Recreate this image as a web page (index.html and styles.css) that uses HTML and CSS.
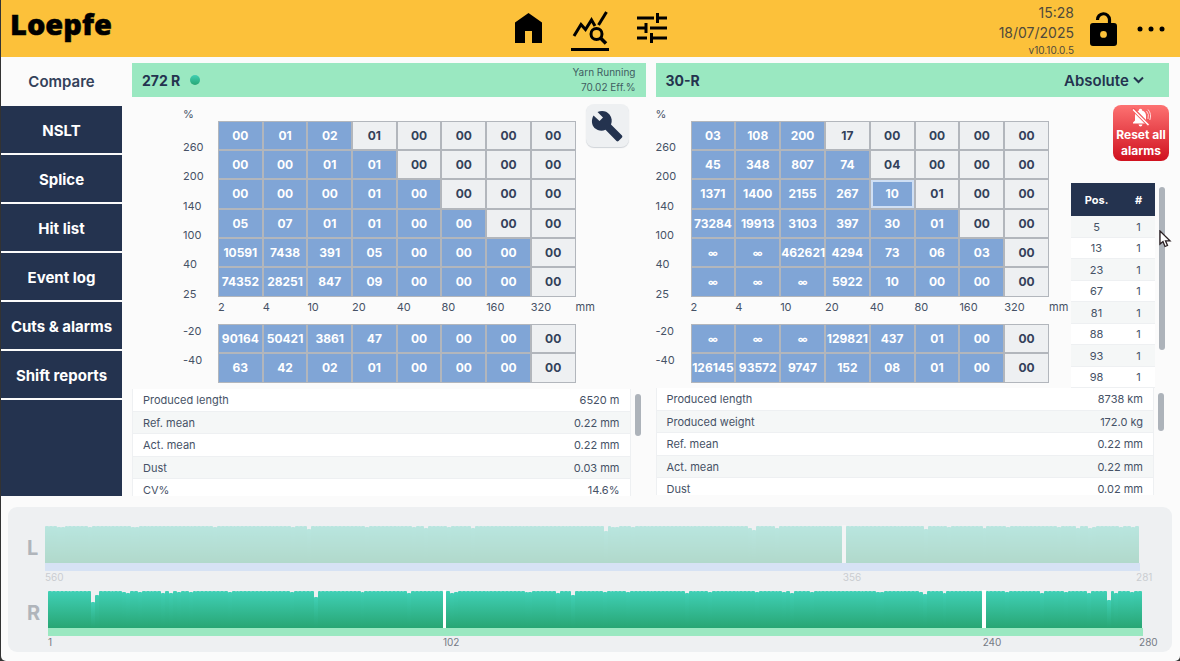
FILE: index.html
```html
<!DOCTYPE html>
<html lang="en">
<head>
<meta charset="utf-8">
<meta name="viewport" content="width=device-width, initial-scale=1">
<title>Loepfe – Compare</title>
<link rel="stylesheet" href="styles.css">
</head>
<body>
<header class="topbar">
  <div class="logo">Loepfe</div>
  <nav class="modes" aria-label="Main">
    <button class="mode" type="button" aria-label="Home">
      <svg width="27" height="30" viewBox="0 0 27 30"><path d="M0 30V9.500L13.500 0L27 9.500V30H17V18H10V30Z"/></svg>
    </button>
    <button class="mode mode-active" type="button" aria-label="Analysis">
      <svg width="36" height="34" viewBox="0 0 36 34" fill="none" stroke="#000" stroke-width="3"><path d="M2 25L9 13.500L13.500 18.500L19.500 9L23 15"/><path d="M26.500 14L34.500 1"/><circle cx="24.500" cy="23" r="5.500"/><path d="M28.500 27L34 32.500" stroke-width="3.500"/></svg>
    </button>
    <button class="mode" type="button" aria-label="Settings">
      <svg width="30" height="30" viewBox="0 0 30 30" fill="none" stroke="#000" stroke-width="3"><path d="M0 5H17M20.500 5H30M20.500 0V10M0 15H9M9 10V20M13 15H30M0 25H10M14.500 25H30M14.500 20V30"/></svg>
    </button>
  </nav>
  <div class="status">
    <div class="clock">
      <span>15:28</span>
      <span>18/07/2025</span>
      <small>v10.10.0.5</small>
    </div>
    <button class="icon-button" type="button" aria-label="Unlock">
      <svg width="27" height="35" viewBox="0 0 27 35"><path d="M7.500 9A6 6 0 0 1 19.500 8.500V13" fill="none" stroke="#000" stroke-width="3.200"/><path fill-rule="evenodd" d="M3 12H24Q27 12 27 15V32Q27 35 24 35H3Q0 35 0 32V15Q0 12 3 12ZM13.500 20A3.400 3.400 0 1 0 13.500 26.800A3.400 3.400 0 1 0 13.500 20Z"/></svg>
    </button>
    <button class="icon-button" type="button" aria-label="More">
      <svg width="28" height="6" viewBox="0 0 28 6"><circle cx="3" cy="3" r="2.500"/><circle cx="14" cy="3" r="2.500"/><circle cx="25" cy="3" r="2.500"/></svg>
    </button>
  </div>
</header>

<main class="main">
  <nav class="sidebar" aria-label="Views">
    <a class="tab tab-active" href="#compare">Compare</a>
    <a class="tab" href="#nslt">NSLT</a>
    <a class="tab" href="#splice">Splice</a>
    <a class="tab" href="#hits">Hit list</a>
    <a class="tab" href="#events">Event log</a>
    <a class="tab" href="#cuts">Cuts &amp; alarms</a>
    <a class="tab" href="#shifts">Shift reports</a>
    <div class="sidebar-rest"></div>
  </nav>

  <section class="panel">
    <div class="panel-head">
      <h2>272 R</h2><span class="dot"></span>
      <p class="running">Yarn Running<br>70.02 Eff.%</p>
    </div>
    <div class="panel-body panel-body-left">
      <table class="matrix">
        <colgroup><col class="col-label"><col span="8"><col class="col-unit"></colgroup>
        <thead><tr><th>%</th><td colspan="9"></td></tr></thead>
        <tbody class="upper">
          <tr><th>260</th><td class="on">00</td><td class="on">01</td><td class="on">02</td><td>01</td><td>00</td><td>00</td><td>00</td><td>00</td></tr>
          <tr><th>200</th><td class="on">00</td><td class="on">00</td><td class="on">01</td><td class="on">01</td><td>00</td><td>00</td><td>00</td><td>00</td></tr>
          <tr><th>140</th><td class="on">00</td><td class="on">00</td><td class="on">00</td><td class="on">01</td><td class="on">00</td><td>00</td><td>00</td><td>00</td></tr>
          <tr><th>100</th><td class="on">05</td><td class="on">07</td><td class="on">01</td><td class="on">01</td><td class="on">00</td><td class="on">00</td><td>00</td><td>00</td></tr>
          <tr><th>40</th><td class="on">10591</td><td class="on">7438</td><td class="on">391</td><td class="on">05</td><td class="on">00</td><td class="on">00</td><td class="on">00</td><td>00</td></tr>
          <tr><th>25</th><td class="on">74352</td><td class="on">28251</td><td class="on">847</td><td class="on">09</td><td class="on">00</td><td class="on">00</td><td class="on">00</td><td>00</td></tr>
        </tbody>
        <tbody class="axis">
          <tr><th></th><th>2</th><th>4</th><th>10</th><th>20</th><th>40</th><th>80</th><th>160</th><th>320</th><th>mm</th></tr>
        </tbody>
        <tbody class="lower">
          <tr><th>-20</th><td class="on">90164</td><td class="on">50421</td><td class="on">3861</td><td class="on">47</td><td class="on">00</td><td class="on">00</td><td class="on">00</td><td>00</td></tr>
          <tr><th>-40</th><td class="on">63</td><td class="on">42</td><td class="on">02</td><td class="on">01</td><td class="on">00</td><td class="on">00</td><td class="on">00</td><td>00</td></tr>
        </tbody>
      </table>
      <div class="tools">
        <button class="wrench" type="button" aria-label="Configure">
          <svg width="32" height="32" viewBox="0 0 32 32" fill="#24334f"><path d="M2.500 5.500L8.500 11L12 7.500L6.500 2C10.500 .300 15.500 .700 18.500 4.500C21 7.500 21.300 11.500 20 14.500L31 25.500Q31.800 26.500 31 27.500L27.500 31Q26.500 31.800 25.500 31L14.500 19.800C10.500 21.500 6.500 20.500 3.500 18C.300 14.500 .300 9.500 2.500 5.500Z"/></svg>
        </button>
      </div>
    </div>
    <div class="stats">
      <div class="stats-view">
        <table class="stats-table">
          <tr><th>Produced length</th><td>6520 m</td></tr>
          <tr><th>Ref. mean</th><td>0.22 mm</td></tr>
          <tr><th>Act. mean</th><td>0.22 mm</td></tr>
          <tr><th>Dust</th><td>0.03 mm</td></tr>
          <tr><th>CV%</th><td>14.6%</td></tr>
        </table>
      </div>
      <span class="thumb thumb-stats"></span>
    </div>
  </section>

  <section class="panel">
    <div class="panel-head">
      <h2>30-R</h2>
      <label class="unit-select">
        <select aria-label="Display mode"><option>Absolute</option></select>
        <svg width="11" height="8" viewBox="0 0 11 8" fill="none" stroke="#24334f" stroke-width="2"><path d="M1 1.500L5.500 6L10 1.500"/></svg>
      </label>
    </div>
    <div class="panel-body panel-body-right">
      <table class="matrix">
        <colgroup><col class="col-label"><col span="8"><col class="col-unit"></colgroup>
        <thead><tr><th>%</th><td colspan="9"></td></tr></thead>
        <tbody class="upper">
          <tr><th>260</th><td class="on">03</td><td class="on">108</td><td class="on">200</td><td>17</td><td>00</td><td>00</td><td>00</td><td>00</td></tr>
          <tr><th>200</th><td class="on">45</td><td class="on">348</td><td class="on">807</td><td class="on">74</td><td>04</td><td>00</td><td>00</td><td>00</td></tr>
          <tr><th>140</th><td class="on">1371</td><td class="on">1400</td><td class="on">2155</td><td class="on">267</td><td class="on picked">10</td><td>01</td><td>00</td><td>00</td></tr>
          <tr><th>100</th><td class="on">73284</td><td class="on">19913</td><td class="on">3103</td><td class="on">397</td><td class="on">30</td><td class="on">01</td><td>00</td><td>00</td></tr>
          <tr><th>40</th><td class="on inf">∞</td><td class="on inf">∞</td><td class="on">462621</td><td class="on">4294</td><td class="on">73</td><td class="on">06</td><td class="on">03</td><td>00</td></tr>
          <tr><th>25</th><td class="on inf">∞</td><td class="on inf">∞</td><td class="on inf">∞</td><td class="on">5922</td><td class="on">10</td><td class="on">00</td><td class="on">00</td><td>00</td></tr>
        </tbody>
        <tbody class="axis">
          <tr><th></th><th>2</th><th>4</th><th>10</th><th>20</th><th>40</th><th>80</th><th>160</th><th>320</th><th>mm</th></tr>
        </tbody>
        <tbody class="lower">
          <tr><th>-20</th><td class="on inf">∞</td><td class="on inf">∞</td><td class="on inf">∞</td><td class="on">129821</td><td class="on">437</td><td class="on">01</td><td class="on">00</td><td>00</td></tr>
          <tr><th>-40</th><td class="on">126145</td><td class="on">93572</td><td class="on">9747</td><td class="on">152</td><td class="on">08</td><td class="on">01</td><td class="on">00</td><td>00</td></tr>
        </tbody>
      </table>
      <div class="tools tools-alarms">
        <button class="reset" type="button">
          <svg width="20" height="19" viewBox="0 0 20 19"><path fill="#fff" d="M8 1.500Q9.500 0 11 1.500V2.500Q15 3.500 15 8V12.500L17 14.500V15.500H2V14.500L4 12.500V8Q4 3.500 8 2.500ZM7.500 16.500H11.500Q11 18.500 9.500 18.500Q8 18.500 7.500 16.500Z"/><path d="M15.500 3Q18.500 6 17 11M17 1.500Q21 6 18.800 12" fill="none" stroke="#ffd9d9"/><path d="M1.500 .500L18 17.500" stroke="#f4585c" stroke-width="3.500"/><path d="M2 1.500L17.500 17" stroke="#fff" stroke-width="1.500"/></svg>
          <span>Reset all alarms</span>
        </button>
        <div class="positions">
          <table class="pos-table">
            <thead><tr><th>Pos.</th><th>#</th></tr></thead>
            <tbody>
              <tr><td>5</td><td>1</td></tr>
              <tr><td>13</td><td>1</td></tr>
              <tr><td>23</td><td>1</td></tr>
              <tr><td>67</td><td>1</td></tr>
              <tr><td>81</td><td>1</td></tr>
              <tr><td>88</td><td>1</td></tr>
              <tr><td>93</td><td>1</td></tr>
              <tr><td>98</td><td>1</td></tr>
            </tbody>
          </table>
          <span class="thumb thumb-pos"></span>
          <svg class="cursor" width="13" height="18" viewBox="0 0 13 18"><path d="M1 1V14L4 11.500L6 16.500L8.500 15.500L6.500 10.800H11Z" fill="#fff" stroke="#2a1f22" stroke-width="1.300"/></svg>
        </div>
      </div>
    </div>
    <div class="stats">
      <div class="stats-view">
        <table class="stats-table">
          <tr><th>Produced length</th><td>8738 km</td></tr>
          <tr><th>Produced weight</th><td>172.0 kg</td></tr>
          <tr><th>Ref. mean</th><td>0.22 mm</td></tr>
          <tr><th>Act. mean</th><td>0.22 mm</td></tr>
          <tr><th>Dust</th><td>0.02 mm</td></tr>
        </table>
      </div>
      <span class="thumb thumb-stats"></span>
    </div>
  </section>
</main>

<section class="machine" aria-label="Machine overview">
  <div class="side side-left">
    <span class="side-name">L</span>
    <div class="side-chart">
      <div class="bars" id="bars-left"></div>
      <div class="strip"></div>
      <div class="ticks"><span class="tick-1">560</span><span class="tick-205">356</span><span class="tick-280">281</span></div>
    </div>
  </div>
  <div class="side side-right">
    <span class="side-name">R</span>
    <div class="side-chart">
      <div class="bars" id="bars-right"></div>
      <div class="strip"></div>
      <div class="ticks"><span class="tick-1">1</span><span class="tick-102">102</span><span class="tick-240">240</span><span class="tick-280">280</span></div>
    </div>
  </div>
</section>
<script src="bars.js"></script>
</body>
</html>
```
FILE: styles.css
```css
* { box-sizing: border-box; }

html { background: #333; }

body {
  margin: 0 0 0 1px;
  min-height: 100vh;
  background: #fbfbfb;
  border-radius: 0 0 5px 5px;
  font-family: Inter, "Liberation Sans", sans-serif;
  color: #465266;
  font-size: 11px;
}

button { border: 0; padding: 0; background: none; font-family: inherit; cursor: pointer; }
svg { display: block; }
table { border-collapse: separate; border-spacing: 0; }
h2, p { margin: 0; }

/* top bar */
.topbar {
  display: grid;
  grid-template-columns: 1fr auto 1fr;
  height: 57px;
  padding: 0 15px 0 9px;
  background: #fcc13a;
}
.logo {
  font-family: "Open Sans", "Noto Sans", sans-serif;
  font-weight: 800;
  font-size: 29px;
  line-height: 48px;
  color: #000;
  -webkit-text-stroke: 0.5px #000;
}
.modes { display: flex; gap: 24px; padding-left: 5px; }
.mode {
  width: 38px;
  height: 51px;
  padding-top: 8px;
  display: flex;
  align-items: center;
  justify-content: center;
  border-bottom: 3px solid transparent;
}
.mode-active { border-bottom-color: #000; }
.status { display: flex; justify-content: flex-end; align-items: center; gap: 20px; padding-bottom: 5px; }
.clock {
  display: flex;
  flex-direction: column;
  align-items: flex-end;
  padding-top: 3px;
  margin-right: -4px;
  font-size: 14px;
  line-height: 20px;
  color: #4f4a3c;
}
.clock small { font-size: 10px; line-height: 14px; }

/* main area */
.main {
  display: grid;
  grid-template-columns: 121px 1fr 1fr;
  column-gap: 10px;
  padding-right: 11px;
}
.sidebar { display: flex; flex-direction: column; }
.tab {
  display: block;
  height: 49px;
  border-bottom: 2px solid #fbfbfb;
  background: #24334f;
  color: #fff;
  font-size: 15px;
  font-weight: 700;
  line-height: 49px;
  text-align: center;
  text-decoration: none;
}
.tab-active { background: #fbfbfb; color: #33415a; font-weight: 600; }
.sidebar-rest { flex: 1; background: #24334f; }

.panel { padding-top: 6px; min-width: 0; }
.panel-head {
  display: flex;
  align-items: center;
  height: 34px;
  padding: 0 10px;
  background: #9ae8c1;
}
h2 { font-size: 14px; font-weight: 700; color: #24334f; }
.dot {
  width: 10px;
  height: 10px;
  margin-left: 10px;
  border-radius: 50%;
  background: linear-gradient(#40d0b4, #28a674);
}
.running { margin-left: auto; text-align: right; font-size: 10px; line-height: 15px; color: #3f5d61; }
.unit-select { display: flex; align-items: center; gap: 4px; margin-left: auto; padding-right: 15px; }
.unit-select select {
  appearance: none;
  border: 0;
  padding: 0;
  background: none;
  font-family: inherit;
  font-size: 15px;
  font-weight: 600;
  color: #24334f;
}

.panel-body { display: flex; align-items: flex-start; }
.panel-body-left { padding-left: 51px; padding-bottom: 6px; }
.tools { flex: 0 0 69px; padding: 7px 0 0 9px; }
.tools-alarms { flex-basis: 119px; padding: 8px 0 0 21px; }

/* class matrix */
.matrix { flex: 1; width: 100%; min-width: 0; table-layout: fixed; }
.col-label { width: 35px; }
.col-unit { width: 1px; }
.matrix th { padding: 0; font-size: 11px; line-height: 13px; font-weight: 400; text-align: left; white-space: nowrap; }
.matrix thead tr { height: 24px; }
.matrix thead th { vertical-align: bottom; }
.matrix thead td { border: 0; background: none; }
.matrix td {
  padding: 0;
  border: 1px solid #b2b6bc;
  background: #eef0f2;
  color: #33415a;
  font-size: 12px;
  font-weight: 700;
  line-height: 16px;
  text-align: center;
}
.matrix td.on { background: #80a5d6; color: #fff; }
.matrix td.inf { font-size: 10px; }
.matrix td.picked { outline: 2px solid #cfdff4; outline-offset: -3px; }
.upper tr { height: 29px; }
.upper tr:nth-child(3n) { height: 30px; }
.matrix .upper th { vertical-align: bottom; line-height: 6px; }
.axis tr { height: 27px; }
.matrix .axis th { vertical-align: top; padding-top: 4px; }
.lower tr { height: 29px; }
.lower tr:last-child { height: 30px; }
.matrix .lower th { vertical-align: top; line-height: 15px; }

.wrench {
  width: 43px;
  height: 43px;
  display: flex;
  align-items: center;
  justify-content: center;
  border-radius: 8px;
  background: #eef0f2;
  box-shadow: 0 1px 1px #cfd3d8;
}

/* alarms */
.reset {
  display: flex;
  flex-direction: column;
  align-items: center;
  width: 56px;
  height: 56px;
  margin: 0 0 22px 42px;
  padding-top: 3px;
  border-radius: 8px;
  background: linear-gradient(#fd7272, #d0111f);
  color: #fff;
  font-size: 12px;
  font-weight: 700;
  line-height: 16px;
}
.positions { position: relative; display: flex; gap: 4px; }
.pos-table { width: 84px; table-layout: fixed; text-align: center; }
.pos-table th { height: 33px; padding: 0; background: #24334f; color: #fff; font-weight: 700; }
.pos-table td { height: 21px; padding: 1px 0 0; border-bottom: 1px solid #eef0f2; background: #fff; line-height: 17px; }
.pos-table tr:nth-child(odd) td { height: 22px; background: #f5f7f7; }
.pos-table th:first-child, .pos-table td:first-child { width: 51px; }
.thumb { display: block; width: 6px; border-radius: 3px; background: #adb3ba; }
.thumb-pos { height: 163px; margin-top: 4px; }
.thumb-stats { height: 42px; margin-top: 5px; }
.panel-body-right + .stats .thumb-stats { height: 38px; }
.cursor { position: absolute; left: 88px; top: 47px; }

/* statistics */
.stats { display: flex; gap: 4px; padding-right: 5px; }
.stats-view { flex: 1; height: 107px; overflow: hidden; border-left: 1px solid #eef0f2; border-right: 1px solid #eef0f2; }
.stats-table { width: 100%; }
.stats-table tr { background: #fff; }
.stats-table tr:nth-child(even) { background: #f5f7f7; }
.stats-table th, .stats-table td { height: 23px; padding: 1px 10px 0; border-bottom: 1px solid #eef0f2; font-weight: 400; line-height: 17px; }
.stats-table tr:nth-child(even) > * { height: 22px; }
.stats-table th { text-align: left; }
.stats-table td { text-align: right; }

/* machine overview */
.machine {
  display: flex;
  flex-direction: column;
  gap: 7px;
  margin: 11px 8px 0 7px;
  padding: 18px 0 4px;
  border-radius: 9px;
  background: #eef0f2;
}
.side { display: grid; grid-template-columns: 37px 1fr; padding-right: 32px; }
.side-right { grid-template-columns: 40px 1fr; padding-right: 29px; }
.side-name { padding-left: 19px; font-size: 20px; font-weight: 700; line-height: 46px; color: #b0b5bb; }
.side-chart { min-width: 0; }
.side-left .side-chart { opacity: 0.3; }
.bars { display: flex; align-items: flex-end; height: 38px; }
.bar { flex: 1; height: 37px; border-radius: 1px 1px 0 0; background: linear-gradient(#40d0b6, #28a674); }
.bar-gap { height: 38px; border-radius: 0; background: #fff; }
.strip { height: 8px; background: #9ae8c1; }
.side-left .strip { background: #a0c4fa; }
.ticks { display: grid; grid-template-columns: repeat(280, minmax(0, 1fr)); height: 12px; line-height: 13px; font-size: 10px; color: #757b85; }
.ticks span { grid-row: 1; white-space: nowrap; }
.tick-1 { grid-column: 1; }
.tick-102 { grid-column: 102; }
.tick-205 { grid-column: 205; }
.tick-240 { grid-column: 240; }
.tick-280 { grid-column: 280; }
```
FILE: bars.js
```js
// One bar per spindle; the maps list spindles whose level drops, in pixels.
function drawBars(id, gaps, drops) {
  const box = document.getElementById(id);
  for (let i = 0; i < 280; i++) {
    const bar = document.createElement('span');
    if (gaps.includes(i)) {
      bar.className = 'bar bar-gap';
    } else {
      bar.className = 'bar';
      if (drops[i]) bar.style.height = (37 - drops[i]) + 'px';
    }
    box.appendChild(bar);
  }
}

drawBars('bars-left', [204], {
  3: 1, 4: 1, 11: 1, 22: 1, 23: 1, 43: 1, 63: 1, 67: 3, 82: 1, 94: 1, 97: 2,
  103: 1, 109: 2, 143: 5, 145: 1, 146: 1, 150: 1, 180: 2, 181: 4, 187: 2,
  225: 3, 231: 1, 240: 2, 246: 1, 259: 1, 264: 2, 267: 2, 268: 1, 275: 1, 278: 1
});
drawBars('bars-right', [101, 239], {
  11: 11, 12: 4, 19: 1, 20: 2, 23: 1, 29: 2, 31: 2, 33: 1, 36: 1, 46: 1, 62: 1,
  68: 6, 80: 1, 92: 2, 103: 2, 104: 1, 122: 1, 123: 1, 130: 2, 134: 4, 142: 1,
  148: 1, 163: 2, 169: 1, 181: 1, 188: 1, 190: 2, 195: 1, 212: 1, 213: 1,
  223: 1, 224: 3, 229: 2, 245: 1, 254: 2, 260: 1, 266: 2, 271: 9, 273: 2, 277: 1
});
```
